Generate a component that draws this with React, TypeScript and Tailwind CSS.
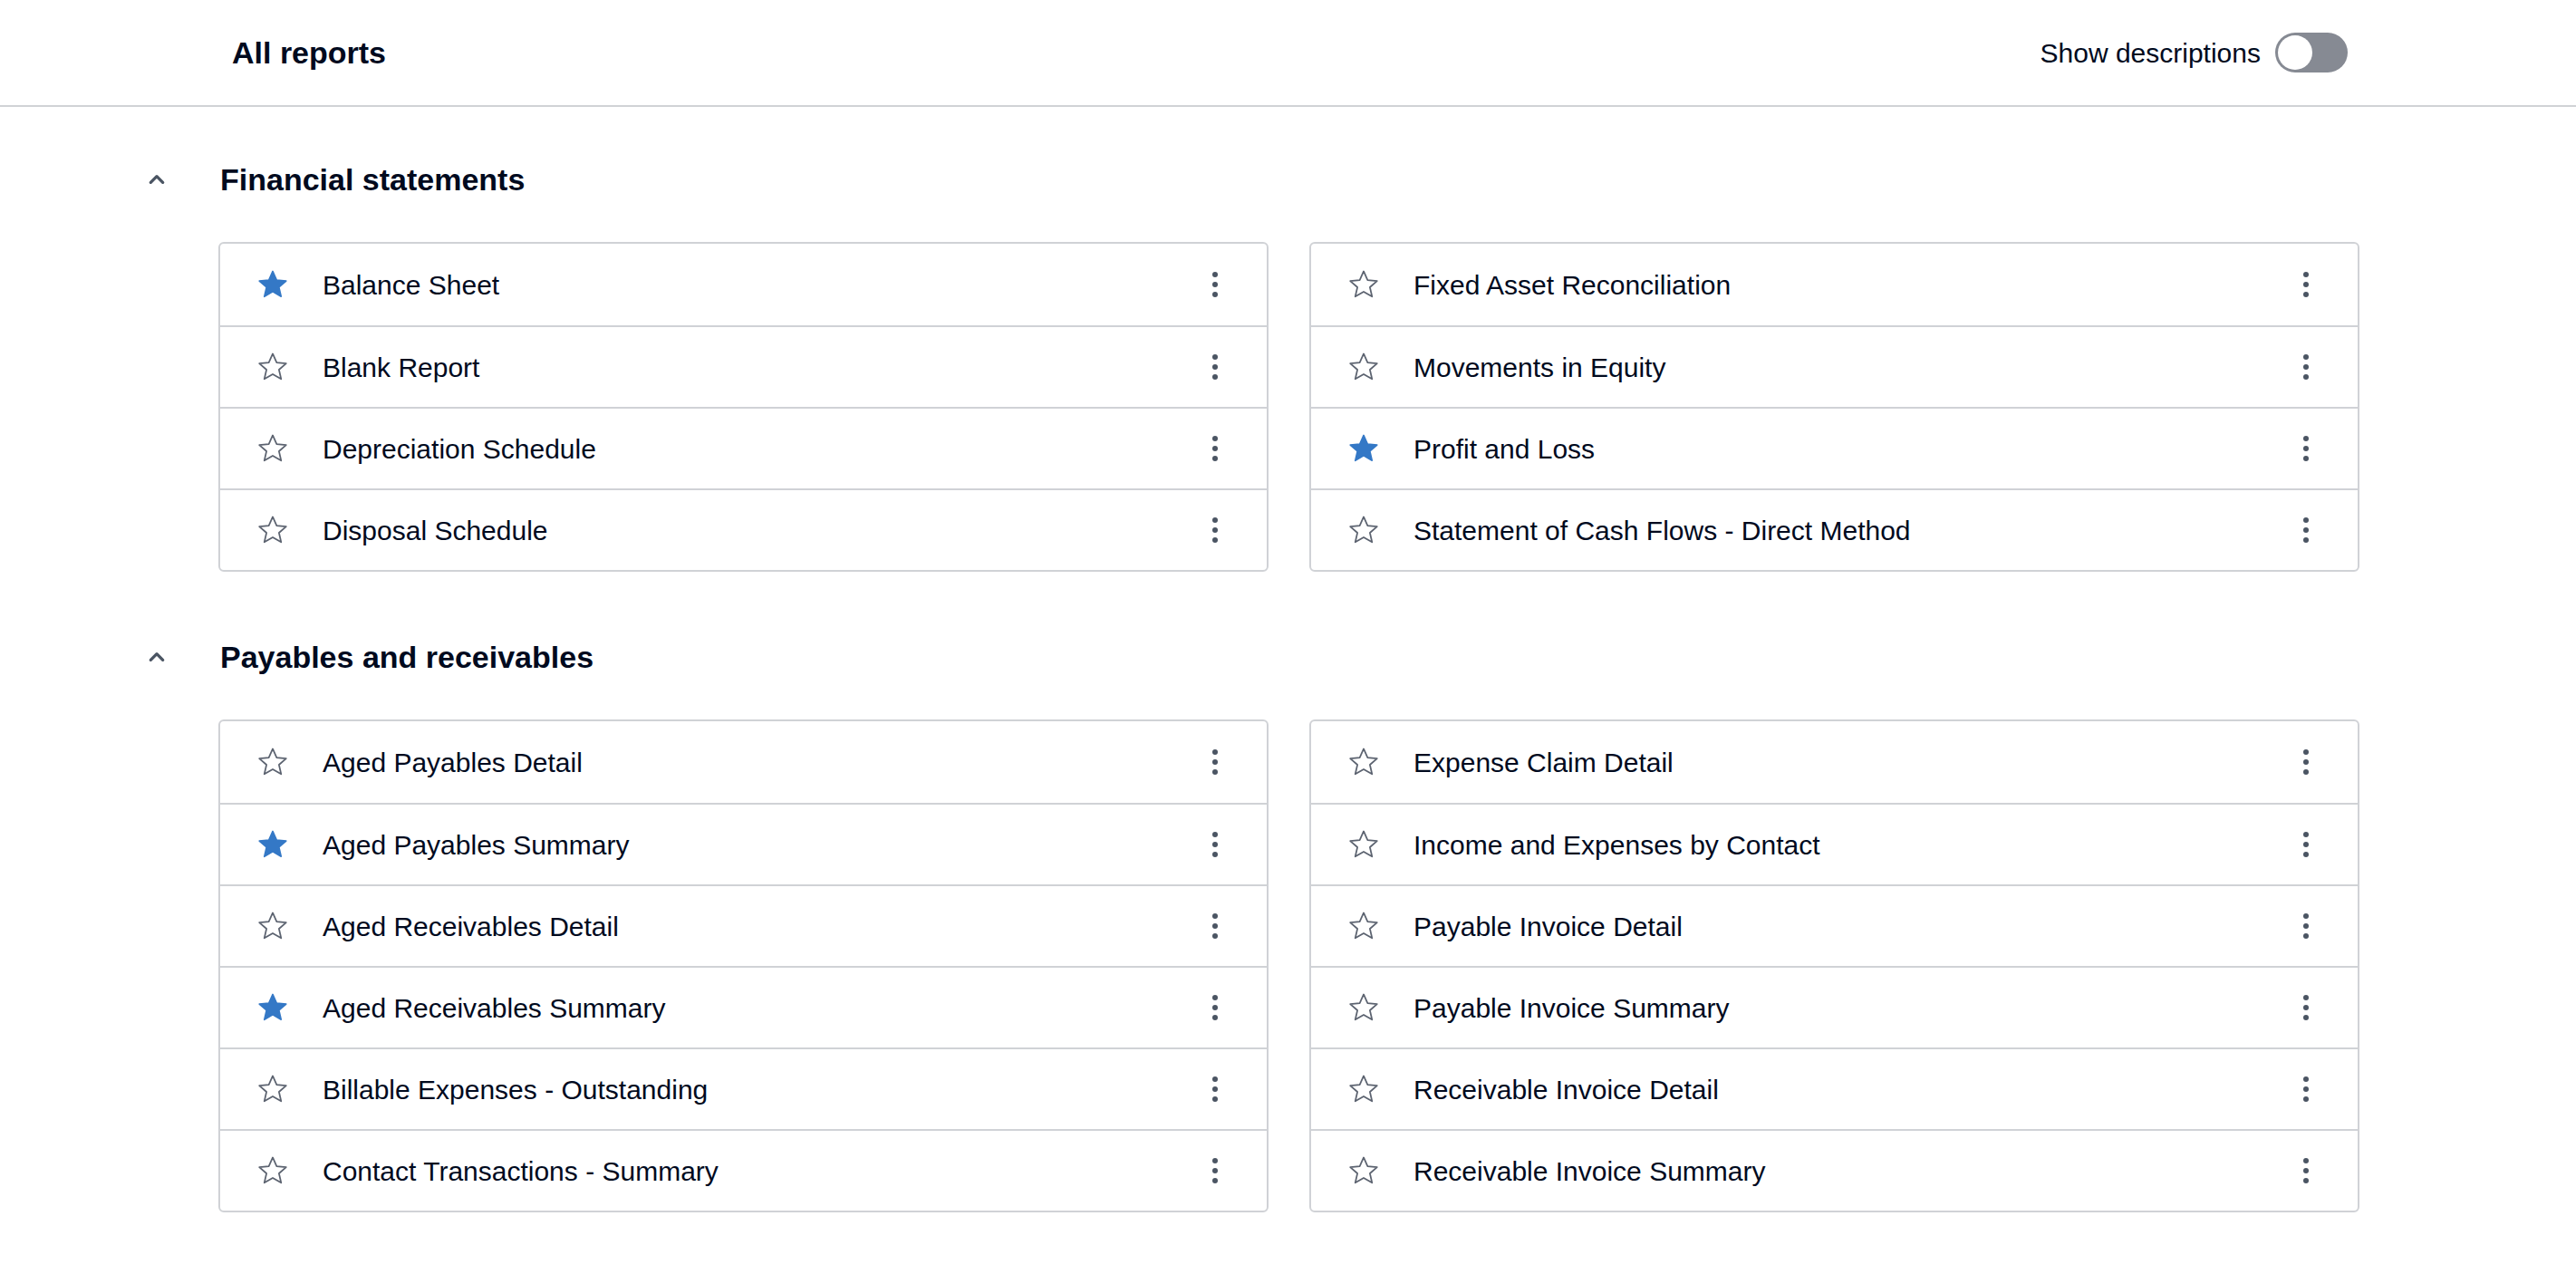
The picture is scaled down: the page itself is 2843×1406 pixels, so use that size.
import React from 'react';

type Report = { name: string; fav?: boolean };

const sections: { title: string; left: Report[]; right: Report[] }[] = [
  {
    title: 'Financial statements',
    left: [
      { name: 'Balance Sheet', fav: true },
      { name: 'Blank Report' },
      { name: 'Depreciation Schedule' },
      { name: 'Disposal Schedule' },
    ],
    right: [
      { name: 'Fixed Asset Reconciliation' },
      { name: 'Movements in Equity' },
      { name: 'Profit and Loss', fav: true },
      { name: 'Statement of Cash Flows - Direct Method' },
    ],
  },
  {
    title: 'Payables and receivables',
    left: [
      { name: 'Aged Payables Detail' },
      { name: 'Aged Payables Summary', fav: true },
      { name: 'Aged Receivables Detail' },
      { name: 'Aged Receivables Summary', fav: true },
      { name: 'Billable Expenses - Outstanding' },
      { name: 'Contact Transactions - Summary' },
    ],
    right: [
      { name: 'Expense Claim Detail' },
      { name: 'Income and Expenses by Contact' },
      { name: 'Payable Invoice Detail' },
      { name: 'Payable Invoice Summary' },
      { name: 'Receivable Invoice Detail' },
      { name: 'Receivable Invoice Summary' },
    ],
  },
];

const Star: React.FC<{ fav?: boolean }> = ({ fav }) => (
  <svg width="38" height="38" viewBox="0 0 24 24">
    <path
      d="M12 2.8l2.75 6.1 6.6.6-5 4.4 1.5 6.5L12 17l-5.85 3.4 1.5-6.5-5-4.4 6.6-.6z"
      fill={fav ? '#3478c6' : 'none'}
      stroke={fav ? '#3478c6' : '#5c6370'}
      strokeWidth={fav ? 1 : 1.1}
      strokeLinejoin="round"
    />
  </svg>
);

const Kebab = () => (
  <svg width="10" height="34" viewBox="0 0 10 34">
    <circle cx="5" cy="6" r="3" fill="#4b5563" />
    <circle cx="5" cy="17" r="3" fill="#4b5563" />
    <circle cx="5" cy="28" r="3" fill="#4b5563" />
  </svg>
);

const Card: React.FC<{ items: Report[] }> = ({ items }) => (
  <div className="border-2 border-[#d0d2d6] rounded-[6px] bg-white">
    {items.map((r, i) => (
      <div
        key={r.name}
        className={`h-[90px] flex items-center pl-[39px] pr-[52px] ${i > 0 ? 'border-t-2 border-[#d0d2d6]' : ''}`}
      >
        <Star fav={r.fav} />
        <span className="ml-[36px] flex-1 text-[30px] text-[#000a1e]">{r.name}</span>
        <Kebab />
      </div>
    ))}
  </div>
);

export default function App() {
  return (
    <div className="min-h-screen bg-white" style={{ fontFamily: '"Liberation Sans", Arial, sans-serif' }}>
      <header className="h-[118px] border-b-2 border-[#d0d2d6] flex items-center justify-between pl-[256px] pr-[252px]">
        <h1 className="text-[34px] font-bold text-[#000a1e]">All reports</h1>
        <div className="flex items-center gap-[16px]">
          <span className="text-[30px] text-[#000a1e]">Show descriptions</span>
          <div className="w-[80px] h-[44px] rounded-full bg-[#868a93] p-[3px] flex items-center">
            <div className="w-[38px] h-[38px] rounded-full bg-white" />
          </div>
        </div>
      </header>
      <main className="pl-[157px] pr-[239px] pt-[52px]">
        {sections.map((s) => (
          <section key={s.title} className="mb-[66px]">
            <div className="flex items-center h-[56px]">
              <svg width="32" height="32" viewBox="0 0 24 24">
                <path d="M7 14.5l5-5 5 5" fill="none" stroke="#4b5563" strokeWidth="2.5" strokeLinecap="round" strokeLinejoin="round" />
              </svg>
              <h2 className="ml-[54px] text-[34px] font-bold text-[#000a1e]">{s.title}</h2>
            </div>
            <div className="ml-[84px] mt-[41px] grid grid-cols-2 gap-[45px]">
              <Card items={s.left} />
              <Card items={s.right} />
            </div>
          </section>
        ))}
      </main>
    </div>
  );
}
